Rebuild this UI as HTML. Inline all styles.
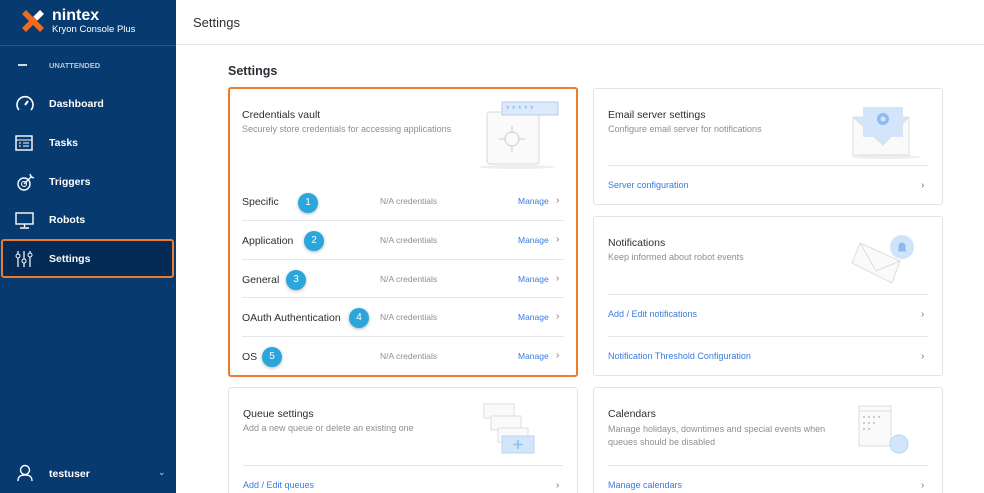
<!DOCTYPE html>
<html style="width:984px;height:493px;overflow:hidden"><head><meta charset="utf-8"><style>
*{box-sizing:border-box;margin:0;padding:0}
body{width:984px;height:493px;overflow:hidden;font-family:"Liberation Sans",sans-serif;background:#fff;position:relative}
.a{position:absolute}
#side{left:0;top:0;width:176px;height:493px;background:#073a6e}
.nav{position:absolute;left:49px;color:#fff;font-size:10.5px;font-weight:bold}
.ic{position:absolute;left:15px}
.card{position:absolute;background:#fff;border:1px solid #e1e4e8;border-radius:3px}
.t{position:absolute;font-size:10.5px;color:#2b2f33}
.d{position:absolute;font-size:9px;color:#8a9096}
.ln{position:absolute;height:1px;background:#e3e6ea}
.lk{position:absolute;font-size:9px;color:#3a7be0}
.ch{position:absolute;font-size:10px;color:#777}
.row{position:absolute;font-size:10.5px;color:#2b2f33;left:12px}
.na{position:absolute;left:150px;font-size:8.5px;color:#8a9096}
.mg{position:absolute;left:288px;font-size:8.5px;color:#3a7be0}
.num{position:absolute;width:20px;height:20px;border-radius:50%;background:#2aa6dd;color:#fff;font-size:10px;text-align:center;line-height:20px;box-shadow:0 1px 3px rgba(0,0,0,.3)}
</style></head><body>
<div id="side" class="a">
 <svg class="a" style="left:21px;top:9px" width="24" height="24" viewBox="0 0 24 24"><path d="M3 3L21 21M21 3L3 21" stroke="#f26b1d" stroke-width="5.5"/><path d="M14.5 9.5L21 3" stroke="#fff" stroke-width="5.5"/></svg>
 <div class="a" style="left:52px;top:7px;color:#fff;font-size:16px;font-weight:bold">nintex</div>
 <div class="a" style="left:52px;top:24px;color:#fff;font-size:9.5px">Kryon Console Plus</div>
 <div class="a" style="left:0;top:45px;width:176px;height:1px;background:#2c5688"></div>
 <div class="a" style="left:18px;top:64px;width:9px;height:1.5px;background:#cfd8e4"></div>
 <div class="a" style="left:49px;top:61px;color:#b9c5d5;font-size:7.5px;font-weight:bold">UNATTENDED</div>
 <svg class="ic" style="top:95px" width="20" height="18" viewBox="0 0 20 18"><path d="M4 15A8 8 0 1 1 16 15" fill="none" stroke="#fff" stroke-width="1.6"/><path d="M10 10L13 6" stroke="#fff" stroke-width="2"/></svg>
 <div class="nav" style="top:98px">Dashboard</div>
 <svg class="ic" style="top:135px" width="18" height="16" viewBox="0 0 18 16"><rect x="1" y="1" width="16" height="14" fill="none" stroke="#fff" stroke-width="1.4"/><path d="M1 5H17M4 8h2M4 11h2M8 8h6M8 11h6" stroke="#fff"/></svg>
 <div class="nav" style="top:137px">Tasks</div>
 <svg class="ic" style="top:172px" width="20" height="20" viewBox="0 0 20 20"><circle cx="9" cy="12" r="6" fill="none" stroke="#fff" stroke-width="1.4"/><circle cx="9" cy="12" r="2.5" fill="none" stroke="#fff"/><path d="M9 12L17 4M15 2l1 3 3 1" stroke="#fff" stroke-width="1.4" fill="none"/></svg>
 <div class="nav" style="top:176px">Triggers</div>
 <svg class="ic" style="top:212px" width="20" height="18" viewBox="0 0 20 18"><rect x="1" y="1" width="17" height="11" fill="none" stroke="#fff" stroke-width="1.4"/><path d="M9.5 12v3M5 16h9" stroke="#fff" stroke-width="1.4"/></svg>
 <div class="nav" style="top:214px">Robots</div>
 <div class="a" style="left:1px;top:239px;width:173px;height:39px;background:#042b56;border:2px solid #f07a2a;border-radius:3px"></div>
 <svg class="ic" style="top:250px" width="18" height="18" viewBox="0 0 18 18"><path d="M3 1v16M9 1v16M15 1v16" stroke="#fff" stroke-width="1.2"/><circle cx="3" cy="6" r="2" fill="#042b56" stroke="#fff"/><circle cx="9" cy="11" r="2" fill="#042b56" stroke="#fff"/><circle cx="15" cy="5" r="2" fill="#042b56" stroke="#fff"/></svg>
 <div class="nav" style="top:253px">Settings</div>
 <svg class="a" style="left:16px;top:464px" width="18" height="18" viewBox="0 0 18 18"><circle cx="9" cy="6" r="4.5" fill="none" stroke="#fff" stroke-width="1.4"/><path d="M2 17c0-5 3-6 7-6s7 1 7 6" fill="none" stroke="#fff" stroke-width="1.4"/></svg>
 <div class="nav" style="top:468px">testuser</div>
 <div class="a" style="left:158px;top:467px;color:#cfd8e4;font-size:9px">&#8964;</div>
</div>
<div class="a" style="left:176px;top:0;width:808px;height:45px;border-bottom:1px solid #e3e6ea;background:#fff"></div>
<div class="a" style="left:193px;top:15px;font-size:13px;color:#2b2f33">Settings</div>
<div class="a" style="left:228px;top:64px;font-size:12.5px;color:#2b2f33;font-weight:bold">Settings</div>

<div class="card" style="left:228px;top:87px;width:350px;height:290px;border:2px solid #f07a2a">
 <div class="t" style="left:12px;top:20px">Credentials vault</div>
 <div class="d" style="left:12px;top:35px">Securely store credentials for accessing applications</div>
 <svg class="a" style="left:245px;top:8px" width="85" height="75" viewBox="0 0 85 75"><ellipse cx="42" cy="70" rx="38" ry="2" fill="#eee"/><rect x="12" y="15" width="52" height="52" rx="3" fill="#fafafa" stroke="#d5d8dc"/><circle cx="37" cy="42" r="7" fill="none" stroke="#ccc"/><path d="M37 35v-6M37 49v6M30 42h-6M44 42h6" stroke="#ccc"/><rect x="27" y="5" width="56" height="13" fill="#dceafc" stroke="#b7cbe8"/><text x="31" y="15" font-size="9" fill="#7fb0ec" font-family="Liberation Sans">* * * * *</text></svg>
 <div class="row" style="top:107px">Specific</div><div class="num" style="left:68px;top:104px">1</div>
 <div class="na" style="top:107px">N/A credentials</div><div class="mg" style="top:107px">Manage</div><div class="ch" style="left:326px;top:106px">›</div>
 <div class="ln" style="left:12px;right:12px;top:131px"></div>
 <div class="row" style="top:146px">Application</div><div class="num" style="left:74px;top:142px">2</div>
 <div class="na" style="top:146px">N/A credentials</div><div class="mg" style="top:146px">Manage</div><div class="ch" style="left:326px;top:145px">›</div>
 <div class="ln" style="left:12px;right:12px;top:170px"></div>
 <div class="row" style="top:185px">General</div><div class="num" style="left:56px;top:181px">3</div>
 <div class="na" style="top:185px">N/A credentials</div><div class="mg" style="top:185px">Manage</div><div class="ch" style="left:326px;top:184px">›</div>
 <div class="ln" style="left:12px;right:12px;top:208px"></div>
 <div class="row" style="top:223px">OAuth Authentication</div><div class="num" style="left:119px;top:219px">4</div>
 <div class="na" style="top:223px">N/A credentials</div><div class="mg" style="top:223px">Manage</div><div class="ch" style="left:326px;top:222px">›</div>
 <div class="ln" style="left:12px;right:12px;top:247px"></div>
 <div class="row" style="top:262px">OS</div><div class="num" style="left:32px;top:258px">5</div>
 <div class="na" style="top:262px">N/A credentials</div><div class="mg" style="top:262px">Manage</div><div class="ch" style="left:326px;top:261px">›</div>
</div>

<div class="card" style="left:593px;top:88px;width:350px;height:117px">
 <div class="t" style="left:14px;top:20px">Email server settings</div>
 <div class="d" style="left:14px;top:35px">Configure email server for notifications</div>
 <svg class="a" style="left:255px;top:16px" width="75" height="55" viewBox="0 0 75 55"><ellipse cx="37" cy="52" rx="35" ry="2" fill="#eee"/><rect x="4" y="12" width="56" height="38" fill="#fafafa" stroke="#ddd"/><rect x="14" y="2" width="40" height="30" fill="#d3e5fb"/><path d="M4 12L34 40L60 12" fill="#d3e5fb" stroke="#ddd"/><circle cx="34" cy="14" r="6" fill="#8bbcf0"/><circle cx="34" cy="14" r="2.5" fill="#d3e5fb"/></svg>
 <div class="ln" style="left:14px;right:14px;top:76px"></div>
 <div class="lk" style="left:14px;top:91px">Server configuration</div><div class="ch" style="left:327px;top:91px">›</div>
</div>

<div class="card" style="left:593px;top:216px;width:350px;height:160px">
 <div class="t" style="left:14px;top:20px">Notifications</div>
 <div class="d" style="left:14px;top:35px">Keep informed about robot events</div>
 <svg class="a" style="left:254px;top:16px" width="70" height="60" viewBox="0 0 70 60"><path d="M4 30L12 10L52 28L44 50Z" fill="#fafafa" stroke="#ddd"/><path d="M12 10L28 38L52 28" fill="none" stroke="#ddd"/><circle cx="54" cy="14" r="12" fill="#cfe3fa"/><path d="M50 18h8M51 18v-5a3 3 0 0 1 6 0v5" fill="#8bbcf0" stroke="#8bbcf0"/></svg>
 <div class="ln" style="left:14px;right:14px;top:119px"></div>
 <div class="lk" style="left:14px;top:92px">Add / Edit notifications</div><div class="ch" style="left:327px;top:92px">›</div>
 <div class="lk" style="left:14px;top:134px">Notification Threshold Configuration</div><div class="ch" style="left:327px;top:134px">›</div>
 <div class="ln" style="left:14px;right:14px;top:77px"></div>
</div>

<div class="card" style="left:228px;top:387px;width:350px;height:110px">
 <div class="t" style="left:14px;top:20px">Queue settings</div>
 <div class="d" style="left:14px;top:35px">Add a new queue or delete an existing one</div>
 <svg class="a" style="left:253px;top:14px" width="60" height="55" viewBox="0 0 60 55"><rect x="2" y="2" width="30" height="14" fill="#fafafa" stroke="#ddd"/><rect x="9" y="14" width="30" height="14" fill="#fafafa" stroke="#ddd"/><rect x="16" y="26" width="30" height="14" fill="#fafafa" stroke="#ddd"/><rect x="20" y="34" width="32" height="17" fill="#d3e5fb" stroke="#b9d3f3"/><path d="M36 38v9M31.5 42.5h9" stroke="#8bbcf0" stroke-width="1.5"/></svg>
 <div class="ln" style="left:14px;right:14px;top:77px"></div>
 <div class="lk" style="left:14px;top:92px">Add / Edit queues</div><div class="ch" style="left:327px;top:92px">›</div>
</div>

<div class="card" style="left:593px;top:387px;width:350px;height:110px">
 <div class="t" style="left:14px;top:20px">Calendars</div>
 <div class="d" style="left:14px;top:35px;line-height:13px">Manage holidays, downtimes and special events when<br>queues should be disabled</div>
 <svg class="a" style="left:263px;top:16px" width="60" height="55" viewBox="0 0 60 55"><rect x="2" y="2" width="32" height="40" fill="#fafafa" stroke="#ddd"/><path d="M2 7h32" stroke="#ddd"/><g fill="#ccc"><rect x="6" y="12" width="2" height="2"/><rect x="11" y="12" width="2" height="2"/><rect x="16" y="12" width="2" height="2"/><rect x="21" y="12" width="2" height="2"/><rect x="6" y="18" width="2" height="2"/><rect x="11" y="18" width="2" height="2"/><rect x="16" y="18" width="2" height="2"/><rect x="6" y="24" width="2" height="2"/><rect x="11" y="24" width="2" height="2"/></g><circle cx="42" cy="40" r="9" fill="#d3e5fb" stroke="#b9d3f3"/></svg>
 <div class="ln" style="left:14px;right:14px;top:77px"></div>
 <div class="lk" style="left:14px;top:92px">Manage calendars</div><div class="ch" style="left:327px;top:92px">›</div>
</div>
</body></html>
